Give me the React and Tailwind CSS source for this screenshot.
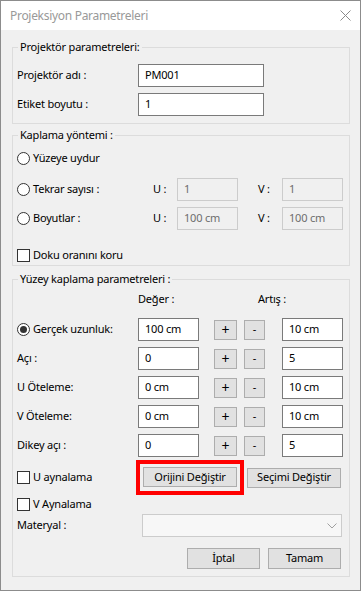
import React from 'react';

const font = { fontFamily: '"Noto Sans", "Open Sans", sans-serif' };

function TextBox({ value, className = '', disabled = false }) {
  return (
    <div
      className={`h-[23px] w-[61px] shrink-0 flex items-center pl-[6px] border ${
        disabled ? 'bg-[#f0f0f0] border-[#cccccc] text-[#6d6d6d]' : 'bg-white border-[#7a7a7a] text-black'
      } ${className}`}
    >
      {value}
    </div>
  );
}

function Radio({ checked }) {
  return (
    <span className="w-[13px] h-[13px] shrink-0 rounded-full border border-[#333333] bg-white flex items-center justify-center">
      {checked && <span className="w-[7px] h-[7px] rounded-full bg-[#333333]" />}
    </span>
  );
}

function Check() {
  return <span className="w-[13px] h-[13px] shrink-0 border border-[#333333] bg-white" />;
}

function Btn({ children, className = '' }) {
  return (
    <div className={`h-[20px] shrink-0 flex items-center justify-center bg-[#e1e1e1] border border-[#adadad] text-black ${className}`}>
      {children}
    </div>
  );
}

function Group({ title, className = '', children }) {
  return (
    <div className={`relative w-[338px] border border-[#dcdcdc] ${className}`}>
      <span className="absolute -top-[9px] left-[5px] px-[2px] bg-[#f0f0f0] leading-[16px]">{title}</span>
      {children}
    </div>
  );
}

// one row of the surface parameters: label, value, +/-, step
function ParamRow({ label, value, step, radio }) {
  return (
    <div className="flex items-center h-[23px] mt-[6px] first:mt-0">
      <div className="w-[121px] shrink-0 flex items-center gap-[3px]">
        {radio && <Radio checked />}
        <span>{label}</span>
      </div>
      <TextBox value={value} />
      <Btn className="w-[23px] ml-[15px] text-[14px]">+</Btn>
      <Btn className="w-[21px] ml-[7px]">-</Btn>
      <TextBox value={step} className="ml-[17px]" />
    </div>
  );
}

export default function App() {
  return (
    <div
      className="w-[361px] h-[591px] border border-[#8c8c8c] bg-[#f0f0f0] text-[11px] tracking-[-0.2px] text-black flex flex-col overflow-hidden"
      style={font}
    >
      {/* Title bar */}
      <div className="h-[29px] shrink-0 bg-white flex items-center justify-between pl-[9px] pr-[9px]">
        <span className="text-[12px] tracking-[-0.3px] text-[#999999]">Projeksiyon Parametreleri</span>
        <svg width="11" height="11" viewBox="0 0 11 11" className="text-[#8a8a8a]">
          <path d="M0.5 0.5 L10.5 10.5 M10.5 0.5 L0.5 10.5" stroke="currentColor" strokeWidth="1" />
        </svg>
      </div>

      <div className="pl-[11px] pt-[17px]">
        {/* Group 1 */}
        <Group title="Projektör parametreleri:" className="h-[77px] pl-[4px] pt-[16px]">
          <div className="flex items-center h-[23px]">
            <span className="w-[121px]">Projektör adı :</span>
            <div className="w-[126px] h-[23px] bg-white border border-[#7a7a7a] flex items-center pl-[6px]">PM001</div>
          </div>
          <div className="flex items-center h-[23px] mt-[6px]">
            <span className="w-[121px]">Etiket boyutu :</span>
            <div className="w-[126px] h-[23px] bg-white border border-[#7a7a7a] flex items-center pl-[6px]">1</div>
          </div>
        </Group>

        {/* Group 2 */}
        <Group title="Kaplama yöntemi :" className="h-[131px] mt-[11px] pl-[4px] pt-[11px]">
          <div className="flex items-center h-[22px] gap-[3px]">
            <Radio />
            <span>Yüzeye uydur</span>
          </div>
          <div className="flex items-center h-[22px] mt-[9px]">
            <div className="w-[136px] flex items-center gap-[3px]">
              <Radio />
              <span>Tekrar sayısı :</span>
            </div>
            <span className="w-[24px]">U :</span>
            <TextBox value="1" disabled className="h-[22px]" />
            <span className="w-[24px] ml-[20px]">V :</span>
            <TextBox value="1" disabled className="h-[22px]" />
          </div>
          <div className="flex items-center h-[22px] mt-[7px]">
            <div className="w-[136px] flex items-center gap-[3px]">
              <Radio />
              <span>Boyutlar :</span>
            </div>
            <span className="w-[24px]">U :</span>
            <TextBox value="100 cm" disabled className="h-[22px]" />
            <span className="w-[24px] ml-[20px]">V :</span>
            <TextBox value="100 cm" disabled className="h-[22px]" />
          </div>
          <div className="flex items-center h-[13px] mt-[20px] gap-[3px]">
            <Check />
            <span>Doku oranını koru</span>
          </div>
        </Group>

        {/* Group 3 */}
        <Group title="Yüzey kaplama parametreleri :" className="h-[298px] mt-[13px] pl-[4px] pt-[11px]">
          <div className="flex items-center h-[16px]">
            <span className="ml-[121px] w-[120px]">Değer :</span>
            <span>Artış :</span>
          </div>
          <div className="mt-[11px]">
            <ParamRow radio label="Gerçek uzunluk:" value="100 cm" step="10 cm" />
            <ParamRow label="Açı :" value="0" step="5" />
            <ParamRow label="U Öteleme:" value="0 cm" step="10 cm" />
            <ParamRow label="V  Öteleme:" value="0 cm" step="10 cm" />
            <ParamRow label="Dikey açı :" value="0" step="5" />
          </div>

          <div className="flex items-center h-[35px] mt-[3px]">
            <div className="w-[119px] flex items-center gap-[3px]">
              <Check />
              <span>U aynalama</span>
            </div>
            <div className="w-[108px] h-[35px] border-[4px] border-[#ff0000] pt-[3px] pl-[3px]">
              <Btn className="w-[94px]">Orijini Değiştir</Btn>
            </div>
            <Btn className="w-[94px] ml-[3px]">Seçimi Değiştir</Btn>
          </div>

          <div className="flex items-center h-[13px] mt-[3px] gap-[3px]">
            <Check />
            <span>V Aynalama</span>
          </div>

          <div className="flex items-center h-[23px] mt-[3px]">
            <span className="w-[125px]">Materyal :</span>
            <div className="w-[200px] h-[23px] border border-[#cccccc] bg-[#f7f7f7] flex items-center justify-end pr-[4px]">
              <svg width="10" height="6" viewBox="0 0 10 6" className="text-[#a0a0a0]">
                <path d="M0.5 0.5 L5 5 L9.5 0.5" fill="none" stroke="currentColor" strokeWidth="1" />
              </svg>
            </div>
          </div>

          <div className="flex items-center h-[21px] mt-[11px] ml-[170px] gap-[8px]">
            <Btn className="w-[73px] h-[21px]">İptal</Btn>
            <Btn className="w-[73px] h-[21px]">Tamam</Btn>
          </div>
        </Group>
      </div>
    </div>
  );
}
